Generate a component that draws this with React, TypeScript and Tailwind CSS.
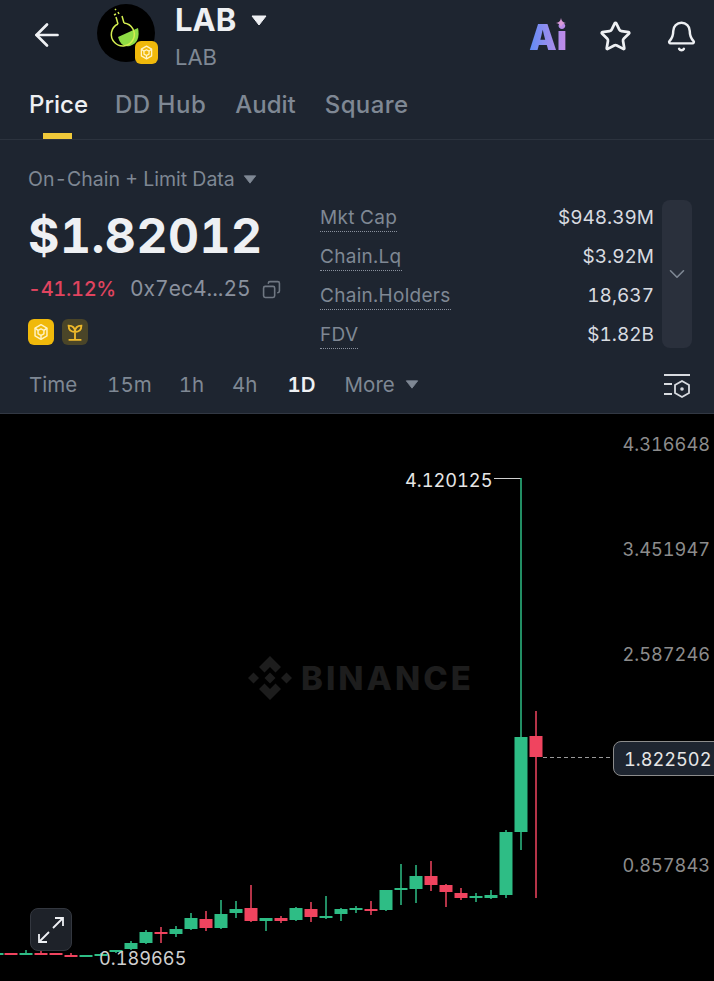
import { ArrowLeft, Star, Bell, ChevronDown, Copy } from 'lucide-react';

type Candle = { x: number; top: number; bottom: number; high: number; low: number; up: boolean };

const GREEN = '#2ebd85';
const RED = '#f0445f';

const c = (x: number, top: number, bottom: number, high: number, low: number, up: boolean): Candle => ({ x, top, bottom, high, low, up });

const candles: Candle[] = [
  c(-3, 953, 955, 953, 955, true),
  c(11, 953, 955, 953, 955, false),
  c(26, 953, 955, 950, 955, true),
  c(41, 953, 955, 951, 955, false),
  c(56, 953, 955, 953, 955, false),
  c(71, 955, 957, 953, 957, false),
  c(86, 955, 957, 955, 957, true),
  c(101, 954, 956, 953, 956, true),
  c(116, 950, 952, 950, 953, true),
  c(131, 943, 949, 941, 950, true),
  c(146, 932, 943, 930, 944, true),
  c(161, 932, 934, 927, 943, false),
  c(176, 929, 934, 926, 937, true),
  c(191, 918, 929, 913, 930, true),
  c(206, 919, 928, 911, 931, false),
  c(221, 914, 928, 900, 929, true),
  c(236, 909, 913, 901, 918, true),
  c(251, 908, 921, 885, 922, false),
  c(266, 918, 921, 918, 931, true),
  c(281, 918, 921, 916, 923, false),
  c(296, 908, 920, 907, 921, true),
  c(311, 909, 917, 902, 922, false),
  c(326, 916, 918, 896, 919, true),
  c(341, 909, 914, 908, 921, true),
  c(356, 908, 910, 906, 913, true),
  c(371, 909, 911, 901, 915, false),
  c(386, 890, 910, 890, 911, true),
  c(401, 888, 890, 864, 905, true),
  c(416, 876, 889, 865, 903, true),
  c(431, 876, 885, 861, 891, false),
  c(446, 885, 892, 884, 907, false),
  c(461, 893, 898, 888, 900, false),
  c(476, 896, 898, 893, 902, true),
  c(491, 895, 898, 890, 899, true),
  c(506, 832, 895, 830, 898, true),
  c(521, 737, 832, 478, 850, true),
  c(536, 736, 757, 711, 898, false),
];

const stats = [
  { label: 'Mkt Cap', value: '$948.39M' },
  { label: 'Chain.Lq', value: '$3.92M' },
  { label: 'Chain.Holders', value: '18,637' },
  { label: 'FDV', value: '$1.82B' },
];

const axis = [
  { label: '4.316648', cls: 'top-[18px]' },
  { label: '3.451947', cls: 'top-[123px]' },
  { label: '2.587246', cls: 'top-[228px]' },
  { label: '0.857843', cls: 'top-[439px]' },
];

function Caret({ className }: { className: string }) {
  return (
    <svg viewBox="0 0 16 11" className={className}>
      <path d="M1 1 H15 L8 10 Z" fill="currentColor" stroke="currentColor" strokeLinejoin="round" />
    </svg>
  );
}

function BnbCube({ className }: { className: string }) {
  return (
    <svg viewBox="0 0 24 24" className={className} fill="none" stroke="#fff3c4" strokeWidth="1.6" strokeLinejoin="round">
      <path d="M12 4 L18.5 7.7 V16.3 L12 20 L5.5 16.3 V7.7 Z" />
      <path d="M12 8.5 L15.2 10.3 V14 L12 15.8 L8.8 14 V10.3 Z" />
      <path d="M5.5 7.7 L8.8 10.3 M18.5 7.7 L15.2 10.3 M12 15.8 V20" />
    </svg>
  );
}

function Flask() {
  return (
    <svg viewBox="0 0 58 58" className="h-full w-full">
      <path d="M21 33 L41 24 Q44 38 33 42 Q24 44 21 33 Z" fill="#8fdc45" />
      <path
        d="M21 20 L19 13 M27 19 L25 12 M21 20 A11.5 11.5 0 1 0 27 19"
        fill="none"
        stroke="#d4ee50"
        strokeWidth="1.5"
      />
      <path d="M17 11 l2 -1 M21 8 l1 2 M18 5 l1 1" stroke="#d4ee50" strokeWidth="1.5" fill="none" />
    </svg>
  );
}

function BinanceMark() {
  return (
    <svg viewBox="0 0 44 44" className="h-[44px] w-[44px]" fill="#1d1d1d">
      <path d="M22 0 L33 11 L27.5 16.5 L22 11 L16.5 16.5 L11 11 Z" />
      <path d="M22 44 L33 33 L27.5 27.5 L22 33 L16.5 27.5 L11 33 Z" />
      <path d="M0 22 L5.5 16.5 L11 22 L5.5 27.5 Z" />
      <path d="M33 22 L38.5 16.5 L44 22 L38.5 27.5 Z" />
      <path d="M22 16.5 L27.5 22 L22 27.5 L16.5 22 Z" />
    </svg>
  );
}

function CandleChart() {
  // y values in the data are page coordinates, the chart starts at 414
  return (
    <svg viewBox="0 414 714 567" className="absolute inset-0 h-full w-full">
      <path d="M494 478.5 H521" stroke="#d0d0d0" strokeWidth="1" />
      <path d="M543 757.5 H613" stroke="#9a9a9a" strokeWidth="1.2" strokeDasharray="4 3" />
      {candles.map((k) => {
        const color = k.up ? GREEN : RED;
        return (
          <g key={k.x}>
            <rect x={k.x - 0.75} y={k.high} width="1.5" height={k.low - k.high} fill={color} />
            <rect x={k.x - 6.5} y={k.top} width="13" height={k.bottom - k.top} fill={color} />
          </g>
        );
      })}
    </svg>
  );
}

export default function App() {
  return (
    <div
      className="flex h-[981px] w-[714px] flex-col overflow-hidden bg-black text-white tabular-nums"
      style={{ fontFamily: 'Inter, sans-serif' }}
    >
      <div className="h-[414px] shrink-0 border-b border-[#323843] bg-[#1e2530]">
        {/* Top bar */}
        <div className="flex h-[70px] items-start">
          <ArrowLeft size={36} strokeWidth={1.8} className="ml-[29px] mt-[17px] text-[#eef0f3]" />
          <div className="relative ml-[32px] mt-1 h-[58px] w-[58px] rounded-full bg-black">
            <Flask />
            <div className="absolute left-[38px] top-[37px] flex h-[23px] w-[23px] items-center justify-center rounded-md bg-[#f0b90b]">
              <BnbCube className="h-[19px] w-[19px]" />
            </div>
          </div>
          <div className="ml-[20px] mt-[1px] flex flex-col">
            <div className="flex items-center">
              <span className="text-[31px] font-bold leading-[38px] text-[#eef0f3]">LAB</span>
              <Caret className="ml-[15px] h-[11px] w-[16px] text-[#eef0f3]" />
            </div>
            <span className="mt-[4px] text-[22px] leading-[28px] text-[#7f8894]">LAB</span>
          </div>
          <div className="ml-auto mr-[16px] mt-[18px] flex items-center">
            <div className="relative mr-[30px] h-[36px] w-[40px]">
              <span className="absolute left-0 top-[-1px] bg-gradient-to-r from-[#5b8cf5] to-[#c48ae8] bg-clip-text text-[35px] font-black leading-[40px] text-transparent">
                Ai
              </span>
              <svg viewBox="0 0 10 10" className="absolute left-[27px] top-[0px] h-[10px] w-[10px]" fill="#d99ad8">
                <path d="M5 0 Q5.6 4.4 10 5 Q5.6 5.6 5 10 Q4.4 5.6 0 5 Q4.4 4.4 5 0 Z" />
              </svg>
            </div>
            <Star size={33} strokeWidth={2} className="mr-[33px] text-[#eef0f3]" />
            <Bell size={33} strokeWidth={1.8} className="text-[#eef0f3]" />
          </div>
        </div>

        {/* Tabs */}
        <div className="flex h-[70px] border-b border-[#2c333e] pl-[29px] text-[24px] font-medium text-[#7f8894]">
          <div className="relative mr-[27px] pt-[20px] leading-[30px] text-[#eef0f3]">
            Price
            <div className="absolute bottom-0 left-[14px] h-[6px] w-[29px] bg-[#f0c93a]" />
          </div>
          <div className="mr-[29px] pt-[20px] leading-[30px] tracking-[0.5px]">DD Hub</div>
          <div className="mr-[29px] pt-[20px] leading-[30px]">Audit</div>
          <div className="pt-[20px] leading-[30px] tracking-[0.4px]">Square</div>
        </div>

        {/* Price + stats */}
        <div className="flex h-[220px] pl-[28px]">
          <div className="w-[292px] shrink-0">
            <div className="mt-[27px] flex items-center text-[19.5px] leading-[24px] text-[#7f8894]">
              On-Chain + Limit Data
              <Caret className="ml-[8px] h-[9px] w-[14px]" />
            </div>
            <div className="mt-[16px] text-[48px] font-bold leading-[58px] tracking-[0.5px] text-[#eef0f3]">$1.82012</div>
            <div className="mt-[11px] flex items-center text-[20px] leading-[26px]">
              <span className="font-medium tracking-[-0.3px] text-[#e0445f]">-41.12%</span>
              <span className="ml-[14px] text-[21px] text-[#8a919e]">0x7ec4...25</span>
              <Copy size={19} className="ml-[11px] -scale-x-100 text-[#6f7782]" />
            </div>
            <div className="mt-[17px] flex gap-2">
              <div className="flex h-[26px] w-[26px] items-center justify-center rounded-md bg-[#f0b90b]">
                <BnbCube className="h-[22px] w-[22px]" />
              </div>
              <div className="flex h-[26px] w-[26px] items-center justify-center rounded-md bg-[#4a4528]">
                <svg viewBox="0 0 24 24" className="h-[22px] w-[22px]" fill="none" stroke="#eeb92b" strokeWidth="2">
                  <path d="M12 20 V12 M5 20.5 H19 M12 12 C7 12 5 9 5 5 C9 5 12 7 12 12 C12 7 15 5 19 5 C19 9 17 12 12 12 Z" />
                </svg>
              </div>
            </div>
          </div>
          <div className="mt-[65px] flex w-[334px] flex-col gap-[9px] text-[19px]">
            {stats.map((s) => (
              <div key={s.label} className="flex h-[30px] items-start justify-between leading-[26px]">
                <span className="border-b border-dotted border-[#8a919e] tracking-[0.3px] text-[#7f8894]">{s.label}</span>
                <span className="text-[#d8dbe0]">{s.value}</span>
              </div>
            ))}
          </div>
          <div className="ml-[8px] mt-[60px] flex h-[148px] w-[30px] items-center justify-center rounded-lg bg-[#2a303c]">
            <ChevronDown size={26} strokeWidth={1.5} className="text-[#7f8894]" />
          </div>
        </div>

        {/* Time row */}
        <div className="flex h-[53px] items-start pl-[29px] pt-[12px] text-[20.5px] leading-[26px] text-[#7f8894]">
          <span>Time</span>
          <span className="ml-[30px]">15m</span>
          <span className="ml-[27px]">1h</span>
          <span className="ml-[28px]">4h</span>
          <span className="ml-[30px] font-semibold text-[#eef0f3]">1D</span>
          <span className="ml-[29px]">More</span>
          <Caret className="ml-[10px] mt-[8px] h-[9px] w-[14px]" />
          <svg viewBox="0 0 28 26" className="ml-auto mr-[23px] mt-[1px] h-[26px] w-[28px]" fill="none" stroke="#d8dbe0" strokeWidth="1.8">
            <path d="M1 2 H27 M1 11 H9 M1 21 H9" />
            <path d="M19 8 L26 12 V20 L19 24 L12 20 V12 Z" />
            <circle cx="19" cy="16" r="1.8" fill="#d8dbe0" stroke="none" />
          </svg>
        </div>
      </div>

      {/* Chart */}
      <div className="relative h-[567px] text-[18.2px] leading-[24px] text-[#8c8c8c]">
        <div className="absolute left-[248px] top-[242px] flex items-center gap-[9px] text-[#1d1d1d]">
          <BinanceMark />
          <span className="text-[33px] font-extrabold leading-[44px] tracking-[3px]">BINANCE</span>
        </div>
        <CandleChart />
        {axis.map((a) => (
          <span key={a.label} className={`absolute right-[4px] ${a.cls}`}>
            {a.label}
          </span>
        ))}
        <span className="absolute left-[405px] top-[54px] text-[#e6e6e6]">4.120125</span>
        <span className="absolute left-[99px] top-[532px] text-[#d0d0d0]">0.189665</span>
        <div className="absolute left-[613px] top-[327px] flex h-[35px] w-[110px] items-center rounded-lg border border-[#8c8c8c] bg-[#1e2530] pl-[10px] text-[#e6e6e6]">
          1.822502
        </div>
        <div className="absolute left-[30px] top-[494px] flex h-[43px] w-[42px] items-center justify-center rounded-lg border border-[#33373f] bg-[#1e2229]">
          <svg viewBox="0 0 26 26" className="h-[26px] w-[26px]" fill="none" stroke="#eef0f3" strokeWidth="1.8">
            <path d="M15 11 L25 1 M17 1 H25 V9" />
            <path d="M11 15 L1 25 M1 17 V25 H9" />
          </svg>
        </div>
      </div>
    </div>
  );
}
